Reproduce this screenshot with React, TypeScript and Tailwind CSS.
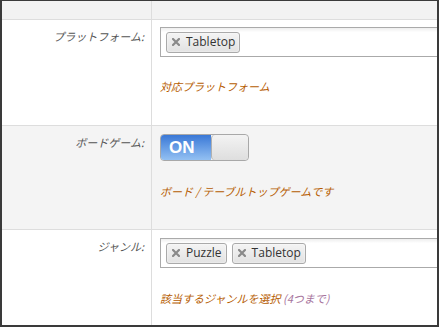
import React from "react";

const jp = { fontFamily: '"Noto Sans CJK JP", "Noto Sans", sans-serif' };
const latin = { fontFamily: '"Open Sans", "Noto Sans", sans-serif' };

function Tag({ label }: { label: string }) {
  return (
    <div
      className="flex items-center h-[21px] pl-[5px] pr-[4px] mr-[5px] rounded-[3px] border border-[#aaaaaa] bg-gradient-to-b from-[#f4f4f4] to-[#e2e2e2] shadow-[0_0_2px_white_inset]"
    >
      <svg width="8" height="8" viewBox="0 0 8 8" className="mr-[6px]">
        <path d="M1 1 L7 7 M7 1 L1 7" stroke="#8a8a8a" strokeWidth="2.2" strokeLinecap="square" />
      </svg>
      <span className="text-[12px] leading-none text-[#333]" style={latin}>
        {label}
      </span>
    </div>
  );
}

function MultiInput({ tags }: { tags: string[] }) {
  return (
    <div className="w-[320px] h-[30px] border border-[#aaaaaa] bg-gradient-to-b from-[#eeeeee] via-white via-[15%] to-white flex items-center pl-[5px]">
      {tags.map((t) => (
        <Tag key={t} label={t} />
      ))}
    </div>
  );
}

function Label({ text }: { text: string }) {
  return (
    <div
      className="w-[150px] shrink-0 border-r border-[#dddddd] pt-2 pr-[7px] text-right text-[11px] leading-4 italic text-[#555555]"
      style={jp}
    >
      {text}
    </div>
  );
}

function Help({ children }: { children: React.ReactNode }) {
  return (
    <div className="text-[11px] leading-4 italic text-[#b65c00]" style={jp}>
      {children}
    </div>
  );
}

export default function App() {
  return (
    <div className="w-[439px] h-[327px] overflow-hidden bg-white border-t border-l-2 border-r-2 border-b-2 border-[#3a3a3a] flex flex-col">
      <div className="flex h-[19px] shrink-0 bg-[#f2f2f2] border-b border-[#dddddd]">
        <div className="w-[150px] border-r border-[#dddddd]" />
        <div className="flex-1" />
      </div>

      <div className="flex h-[106px] shrink-0 border-b border-[#dddddd] bg-white">
        <Label text="プラットフォーム:" />
        <div className="flex-1 overflow-hidden pl-2 pt-[7px]">
          <MultiInput tags={["Tabletop"]} />
          <div className="mt-[21px]">
            <Help>対応プラットフォーム</Help>
          </div>
        </div>
      </div>

      <div className="flex h-[104px] shrink-0 border-b border-[#dddddd] bg-[#f4f4f4]">
        <Label text="ボードゲーム:" />
        <div className="flex-1 overflow-hidden pl-2 pt-2">
          <div className="flex w-[89px] h-[27px] rounded-[4px] border border-[#a8a8a8] overflow-hidden">
            <div
              className="w-[50px] flex items-center pl-[8px] bg-gradient-to-b from-[#3a78d6] to-[#93c0f2] text-white text-[17px] font-bold"
              style={{ fontFamily: '"Liberation Sans", Arial, sans-serif' }}
            >
              ON
            </div>
            <div className="flex-1 rounded-[4px] border-l border-[#b0b0b0] bg-gradient-to-b from-[#f3f3f3] to-[#dedede]" />
          </div>
          <div className="mt-[22px]">
            <Help>ボード / テーブルトップゲームです</Help>
          </div>
        </div>
      </div>

      <div className="flex flex-1 bg-white">
        <Label text="ジャンル:" />
        <div className="flex-1 overflow-hidden pl-2 pt-2">
          <MultiInput tags={["Puzzle", "Tabletop"]} />
          <div className="mt-[22px]">
            <Help>
              該当するジャンルを選択 <span className="text-[#a6739c]">(4つまで)</span>
            </Help>
          </div>
        </div>
      </div>
    </div>
  );
}
